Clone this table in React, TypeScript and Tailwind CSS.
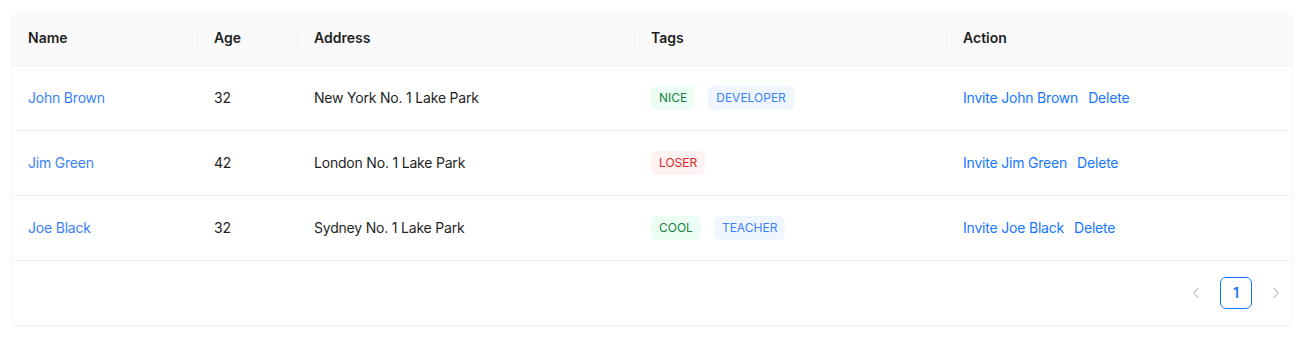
import React from "react";

type Row = { name: string; age: number; address: string; tags: string[] };

const rows: Row[] = [
  { name: "John Brown", age: 32, address: "New York No. 1 Lake Park", tags: ["nice", "developer"] },
  { name: "Jim Green", age: 42, address: "London No. 1 Lake Park", tags: ["loser"] },
  { name: "Joe Black", age: 32, address: "Sydney No. 1 Lake Park", tags: ["cool", "teacher"] },
];

const tagClass: Record<string, string> = {
  nice: "bg-[#ecfdf3] text-[#15803d]",
  cool: "bg-[#ecfdf3] text-[#15803d]",
  developer: "bg-[#eff6ff] text-[#3b82f6]",
  teacher: "bg-[#eff6ff] text-[#3b82f6]",
  loser: "bg-[#fef2f2] text-[#dc2626]",
};

const cols = "grid grid-cols-[186px_100px_337px_312px_1fr]";

function HeadCell({ children, sep }: { children: React.ReactNode; sep?: boolean }) {
  return (
    <div className="relative flex items-center px-4 h-full">
      {sep && <span className="absolute -left-px top-1/2 -translate-y-1/2 w-px h-[22px] bg-[#f0f0f0]" />}
      {children}
    </div>
  );
}

export default function App() {
  return (
    <div
      className="bg-white w-[1306px] h-[339px] pt-[11px] pl-3 pr-[14px]"
      style={{ fontFamily: "Inter, 'Noto Sans', sans-serif" }}
    >
      <div className="rounded-lg bg-white shadow-[0_1px_3px_rgba(0,0,0,0.06),0_1px_2px_rgba(0,0,0,0.03)] overflow-hidden">
        <div className={`${cols} h-[55px] bg-[#fafafa] border-b border-[#f0f0f0] text-sm font-semibold text-[#1f1f1f]`}>
          <HeadCell>Name</HeadCell>
          <HeadCell sep>Age</HeadCell>
          <HeadCell sep>Address</HeadCell>
          <HeadCell sep>Tags</HeadCell>
          <HeadCell sep>Action</HeadCell>
        </div>
        {rows.map((r) => (
          <div
            key={r.name}
            className={`${cols} h-[65px] border-b border-[#f0f0f0] text-sm tracking-[-0.2px] text-[#1f1f1f] items-center`}
          >
            <div className="px-4 text-[#3b82f6]">{r.name}</div>
            <div className="px-4">{r.age}</div>
            <div className="px-4">{r.address}</div>
            <div className="px-4 flex gap-[13px] tracking-normal">
              {r.tags.map((t) => (
                <span key={t} className={`rounded-md px-2 h-6 flex items-center text-xs ${tagClass[t]}`}>
                  {t.toUpperCase()}
                </span>
              ))}
            </div>
            <div className="px-4 flex gap-[10px] text-[#1677ff]">
              <span>Invite {r.name}</span>
              <span>Delete</span>
            </div>
          </div>
        ))}
        <div className="h-16 flex items-center justify-end gap-2">
          <span className="w-8 h-8 flex items-center justify-center text-[#c4c4c4]">
            <svg width="12" height="12" viewBox="0 0 12 12" fill="none" stroke="currentColor" strokeWidth="1.1">
              <path d="M8.5 1 3.5 6l5 5" />
            </svg>
          </span>
          <span className="w-8 h-8 flex items-center justify-center rounded-md border border-[#1677ff] text-[#1677ff] text-sm font-semibold">
            1
          </span>
          <span className="w-8 h-8 flex items-center justify-center text-[#c4c4c4]">
            <svg width="12" height="12" viewBox="0 0 12 12" fill="none" stroke="currentColor" strokeWidth="1.1">
              <path d="M3.5 1 8.5 6l-5 5" />
            </svg>
          </span>
        </div>
      </div>
    </div>
  );
}
